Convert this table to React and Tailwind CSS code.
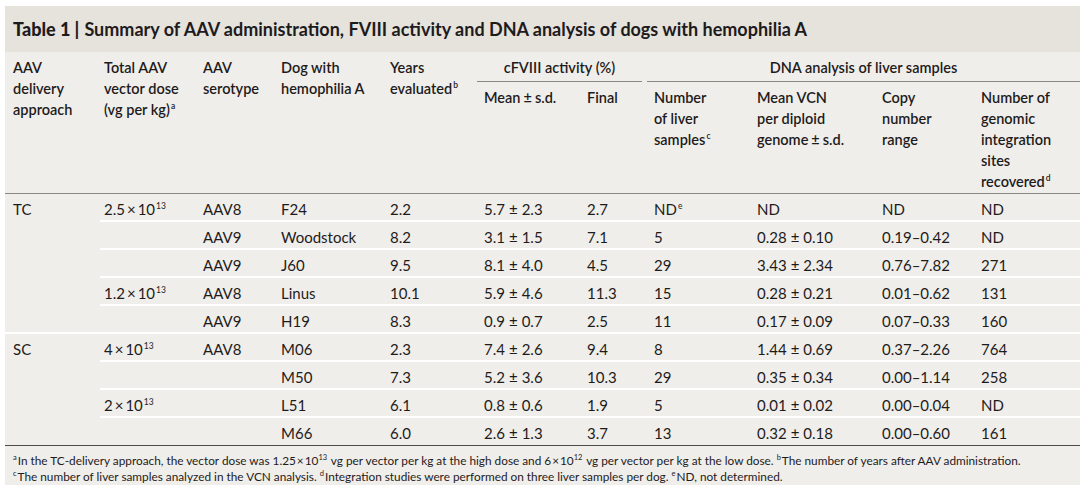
import React from "react";

const F = { fontFamily: "Lato, 'Open Sans', 'Liberation Sans', sans-serif" };

const PM = () => <span className="mx-[4px]">±</span>;
const PMH = () => <span className="mx-[3px]">±</span>;
const X = () => <span className="mx-[2px]">×</span>;
const XS = () => <span className="mx-[1px]">×</span>;
const Sup = ({ children }) => (
  <sup className="text-[8.5px] top-[-0.7em] ml-[1px]">{children}</sup>
);
const FSup = ({ children }) => (
  <sup className="text-[7.5px] top-[-0.7em] mr-[1px]">{children}</sup>
);

const W = [91, 99, 78, 109, 94, 103, 67, 103, 125, 99, 103];

const pm = (a, b) => (
  <>
    {a}
    <PM />
    {b}
  </>
);
const dose = (a, e) => (
  <>
    {a}
    <X />
    10<Sup>{e}</Sup>
  </>
);

const groups = [
  {
    label: "TC",
    rows: [
      [dose("2.5", "13"), "AAV8", "F24", "2.2", pm("5.7", "2.3"), "2.7", <>ND<Sup>e</Sup></>, "ND", "ND", "ND"],
      ["", "AAV9", "Woodstock", "8.2", pm("3.1", "1.5"), "7.1", "5", pm("0.28", "0.10"), "0.19–0.42", "ND"],
      ["", "AAV9", "J60", "9.5", pm("8.1", "4.0"), "4.5", "29", pm("3.43", "2.34"), "0.76–7.82", "271"],
      [dose("1.2", "13"), "AAV8", "Linus", "10.1", pm("5.9", "4.6"), "11.3", "15", pm("0.28", "0.21"), "0.01–0.62", "131"],
      ["", "AAV9", "H19", "8.3", pm("0.9", "0.7"), "2.5", "11", pm("0.17", "0.09"), "0.07–0.33", "160"],
    ],
  },
  {
    label: "SC",
    rows: [
      [dose("4", "13"), "AAV8", "M06", "2.3", pm("7.4", "2.6"), "9.4", "8", pm("1.44", "0.69"), "0.37–2.26", "764"],
      ["", "", "M50", "7.3", pm("5.2", "3.6"), "10.3", "29", pm("0.35", "0.34"), "0.00–1.14", "258"],
      [dose("2", "13"), "", "L51", "6.1", pm("0.8", "0.6"), "1.9", "5", pm("0.01", "0.02"), "0.00–0.04", "ND"],
      ["", "", "M66", "6.0", pm("2.6", "1.3"), "3.7", "13", pm("0.32", "0.18"), "0.00–0.60", "161"],
    ],
  },
];

function HeadCell({ w, children }) {
  return (
    <div style={{ width: w }} className="shrink-0 pl-1 leading-[21px]">
      {children}
    </div>
  );
}

export default function App() {
  return (
    <div className="w-[1080px] h-[502px] bg-white text-[#1e1b1c]" style={F}>
      <div className="ml-[5px] pt-[6px]">
        <div className="w-[1075px] bg-[#f0eeea]">
          {/* Title band */}
          <div className="h-[46px] bg-[#e6e2dc] flex items-center pl-2 text-[18px] whitespace-nowrap">
            <span className="font-black">Table 1 |</span>
            <span className="font-bold ml-[5px]">
              Summary of AAV administration, FVIII activity and DNA analysis of dogs with hemophilia A
            </span>
          </div>

          {/* Header */}
          <div className="h-[142px] border-b-[1.5px] border-[#8a8886] flex text-[14.5px] font-semibold whitespace-nowrap">
            <div style={{ width: 95 }} className="shrink-0 pl-2 pt-[5px] leading-[21px]">
              AAV
              <br />
              delivery
              <br />
              approach
            </div>
            <div className="flex pt-[5px]">
              <HeadCell w={99}>
                Total AAV
                <br />
                vector dose
                <br />
                (vg per kg)<Sup>a</Sup>
              </HeadCell>
              <HeadCell w={78}>
                AAV
                <br />
                serotype
              </HeadCell>
              <HeadCell w={109}>
                Dog with
                <br />
                hemophilia A
              </HeadCell>
              <HeadCell w={94}>
                Years
                <br />
                evaluated<Sup>b</Sup>
              </HeadCell>
            </div>
            <div className="flex flex-col pt-[5px]" style={{ width: 170 }}>
              <div className="leading-[21px] text-center ml-[-3px] mr-[8px] pb-[3px] border-b-[1.5px] border-[#8a8886]">
                cFVIII activity (%)
              </div>
              <div className="flex pt-[5px]">
                <HeadCell w={103}>
                  Mean
                  <PMH />
                  s.d.
                </HeadCell>
                <HeadCell w={67}>Final</HeadCell>
              </div>
            </div>
            <div className="flex flex-col pt-[5px] flex-1">
              <div className="leading-[21px] text-center ml-[-3px] pb-[3px] border-b-[1.5px] border-[#8a8886]">
                DNA analysis of liver samples
              </div>
              <div className="flex pt-[5px]">
                <HeadCell w={103}>
                  Number
                  <br />
                  of liver
                  <br />
                  samples<Sup>c</Sup>
                </HeadCell>
                <HeadCell w={125}>
                  Mean VCN
                  <br />
                  per diploid
                  <br />
                  genome
                  <PMH />
                  s.d.
                </HeadCell>
                <HeadCell w={99}>
                  Copy
                  <br />
                  number
                  <br />
                  range
                </HeadCell>
                <HeadCell w={103}>
                  Number of
                  <br />
                  genomic
                  <br />
                  integration
                  <br />
                  sites
                  <br />
                  recovered<Sup>d</Sup>
                </HeadCell>
              </div>
            </div>
          </div>

          {/* Body */}
          <div className="text-[15px] whitespace-nowrap">
            {groups.map((g, gi) => (
              <div key={gi} className={"flex " + (gi > 0 ? "border-t-2 border-white" : "")}>
                <div style={{ width: 95 }} className="shrink-0 pl-2 h-[26px] pt-[4px] flex items-center">
                  {g.label}
                </div>
                <div className="flex-1">
                  {g.rows.map((r, ri) => (
                    <div
                      key={ri}
                      className={
                        "flex items-center box-border pt-[4px] " +
                        (ri > 0 ? "h-[28px] border-t-2 border-white" : "h-[26px]")
                      }
                    >
                      {r.map((c, ci) => (
                        <div key={ci} style={{ width: W[ci + 1] }} className="shrink-0 pl-1">
                          {c}
                        </div>
                      ))}
                    </div>
                  ))}
                </div>
              </div>
            ))}
            <div className="h-[1px]" />
          </div>

          {/* Footnotes */}
          <div className="border-t-[1.5px] border-[#4d4b4a] pl-2 pt-[7px] pb-0 text-[11.8px] leading-[16px] whitespace-nowrap">
            <div>
              <FSup>a</FSup>In the TC-delivery approach, the vector dose was 1.25
              <XS />
              10<FSup>13</FSup> vg per vector per kg at the high dose and 6
              <XS />
              10<FSup>12</FSup> vg per vector per kg at the low dose. <FSup>b</FSup>The number of years after AAV
              administration.
            </div>
            <div>
              <FSup>c</FSup>The number of liver samples analyzed in the VCN analysis. <FSup>d</FSup>Integration studies
              were performed on three liver samples per dog. <FSup>e</FSup>ND, not determined.
            </div>
          </div>
        </div>
      </div>
    </div>
  );
}
